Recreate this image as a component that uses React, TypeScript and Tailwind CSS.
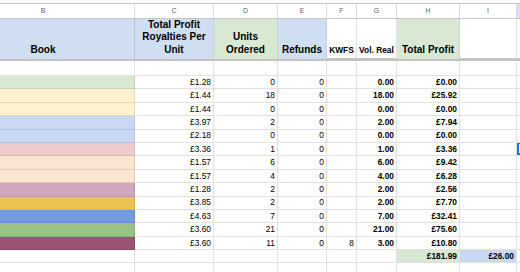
import React from "react";

const GRID = "grid grid-cols-[183px_79px_64px_49px_30px_40px_63px_57px_60px]";

type R = { color: string; c: string; d: string; e: string; f: string; g: string; h: string; extra?: string };

const rows: R[] = [
  { color: "bg-[#d9e8d3]", c: "£1.28", d: "0", e: "0", f: "", g: "0.00", h: "£0.00" },
  { color: "bg-[#fdf2cd]", c: "£1.44", d: "18", e: "0", f: "", g: "18.00", h: "£25.92" },
  { color: "bg-[#fdf2cd]", c: "£1.44", d: "0", e: "0", f: "", g: "0.00", h: "£0.00" },
  { color: "bg-[#c9d9f5]", c: "£3.97", d: "2", e: "0", f: "", g: "2.00", h: "£7.94" },
  { color: "bg-[#c9d9f5]", c: "£2.18", d: "0", e: "0", f: "", g: "0.00", h: "£0.00" },
  { color: "bg-[#eecccb]", c: "£3.36", d: "1", e: "0", f: "", g: "1.00", h: "£3.36" },
  { color: "bg-[#f9e5d0]", c: "£1.57", d: "6", e: "0", f: "", g: "6.00", h: "£9.42" },
  { color: "bg-[#f9e5d0]", c: "£1.57", d: "4", e: "0", f: "", g: "4.00", h: "£6.28" },
  { color: "bg-[#cfa6bd]", c: "£1.28", d: "2", e: "0", f: "", g: "2.00", h: "£2.56" },
  { color: "bg-[#ebc24f]", c: "£3.85", d: "2", e: "0", f: "", g: "2.00", h: "£7.70", extra: "border-b-[#f2b31c]" },
  { color: "bg-[#739ae2]", c: "£4.63", d: "7", e: "0", f: "", g: "7.00", h: "£32.41" },
  { color: "bg-[#9bc184]", c: "£3.60", d: "21", e: "0", f: "", g: "21.00", h: "£75.60" },
  { color: "bg-[#9a5375]", c: "£3.60", d: "11", e: "0", f: "8", g: "3.00", h: "£10.80" },
];

const cell = "border-r border-b border-[#e2e2e2] flex items-center justify-end pr-[2px] overflow-hidden whitespace-nowrap";

function Letter({ t, extra = "" }: { t: string; extra?: string }) {
  return (
    <div className={`border-r border-[#dadce0] flex items-center justify-center text-[7px] text-[#5f6368] ${extra}`}>{t}</div>
  );
}

export default function App() {
  return (
    <div
      className="w-[520px] h-[272px] overflow-hidden bg-white text-black"
      style={{ fontFamily: '"Liberation Sans", Arial, sans-serif' }}
    >
      <div className="-ml-[48px] w-[620px]">
        <div className="h-[3px] bg-[#f9fbfd]" />
        {/* column letters */}
        <div className={`${GRID} h-[16px] border-y border-[#c4c7c5] bg-white`}>
          <Letter t="B" />
          <Letter t="C" />
          <Letter t="D" />
          <Letter t="E" />
          <Letter t="F" />
          <Letter t="G" />
          <Letter t="H" />
          <Letter t="I" />
          <Letter t="" extra="bg-[#d3e3fd]" />
        </div>
        {/* header row */}
        <div className={`${GRID} h-[39px] font-bold text-[10px] leading-[12.3px] text-center`}>
          <div className="bg-[#cfdef1] border-r border-[#b9c6d8] flex items-end justify-center pb-[3px]">Book</div>
          <div className="bg-[#cfdef1] border-r border-[#c0cfe3] flex items-end justify-center pb-[3px]">
            <span>Total Profit<br />Royalties Per<br />Unit</span>
          </div>
          <div className="bg-[#d9e8d3] border-r border-[#c9d9c3] flex items-end justify-center pb-[3px]">
            <span>Units<br />Ordered</span>
          </div>
          <div className="bg-[#cfdef1] border-r border-[#c0cfe3] flex items-end justify-center pb-[3px]">Refunds</div>
          <div className="border-r border-[#e2e2e2] flex items-end justify-center pb-[3px] text-[8.4px] whitespace-nowrap">KWFS</div>
          <div className="border-r border-[#e2e2e2] flex items-end justify-center pb-[3px] text-[8.4px] whitespace-nowrap">Vol. Real</div>
          <div className="bg-[#d9e8d3] border-r border-[#c9d9c3] flex items-end justify-center pb-[3px]">Total Profit</div>
          <div className="border-r border-[#e2e2e2]" />
          <div className="border-r border-[#e2e2e2]" />
        </div>
        {/* freeze bar */}
        <div className="h-[3px] bg-[#c4c4c4]" />
        {/* empty row */}
        <div className={`${GRID} h-[15px]`}>
          <div className={cell} />
          <div className={cell} />
          <div className={cell} />
          <div className={cell} />
          <div className={cell} />
          <div className={cell} />
          <div className={cell} />
          <div className={cell} />
          <div className={cell} />
        </div>
        {rows.map((r, i) => (
          <div key={i} className={`${GRID} h-[13.4px] text-[8.4px]`}>
            <div className={`${r.color} border-r border-b border-black/10 ${r.extra ?? ""}`} />
            <div className={cell}>{r.c}</div>
            <div className={cell}>{r.d}</div>
            <div className={cell}>{r.e}</div>
            <div className={cell}>{r.f}</div>
            <div className={`${cell} font-bold`}>{r.g}</div>
            <div className={`${cell} font-bold`}>{r.h}</div>
            <div className={cell} />
            <div className={`${cell} relative`}>
              {i === 5 && <div className="absolute inset-0 -top-px border-2 border-[#1a73e8]" />}
            </div>
          </div>
        ))}
        {/* totals row */}
        <div className={`${GRID} h-[13.4px] text-[8.4px] font-bold`}>
          <div className="border-r border-b border-[#e2e2e2]" />
          <div className={cell} />
          <div className={cell} />
          <div className={cell} />
          <div className={cell} />
          <div className={cell} />
          <div className={`${cell} bg-[#d9e8d3]`}>£181.99</div>
          <div className={`${cell} bg-[#c9d9f5]`}>£26.00</div>
          <div className={cell} />
        </div>
        <div className={`${GRID} h-[13.4px]`}>
          <div className="border-r border-b border-[#e2e2e2]" />
          <div className={cell} />
          <div className={cell} />
          <div className={cell} />
          <div className={cell} />
          <div className={cell} />
          <div className={cell} />
          <div className={cell} />
          <div className={cell} />
        </div>
      </div>
    </div>
  );
}
